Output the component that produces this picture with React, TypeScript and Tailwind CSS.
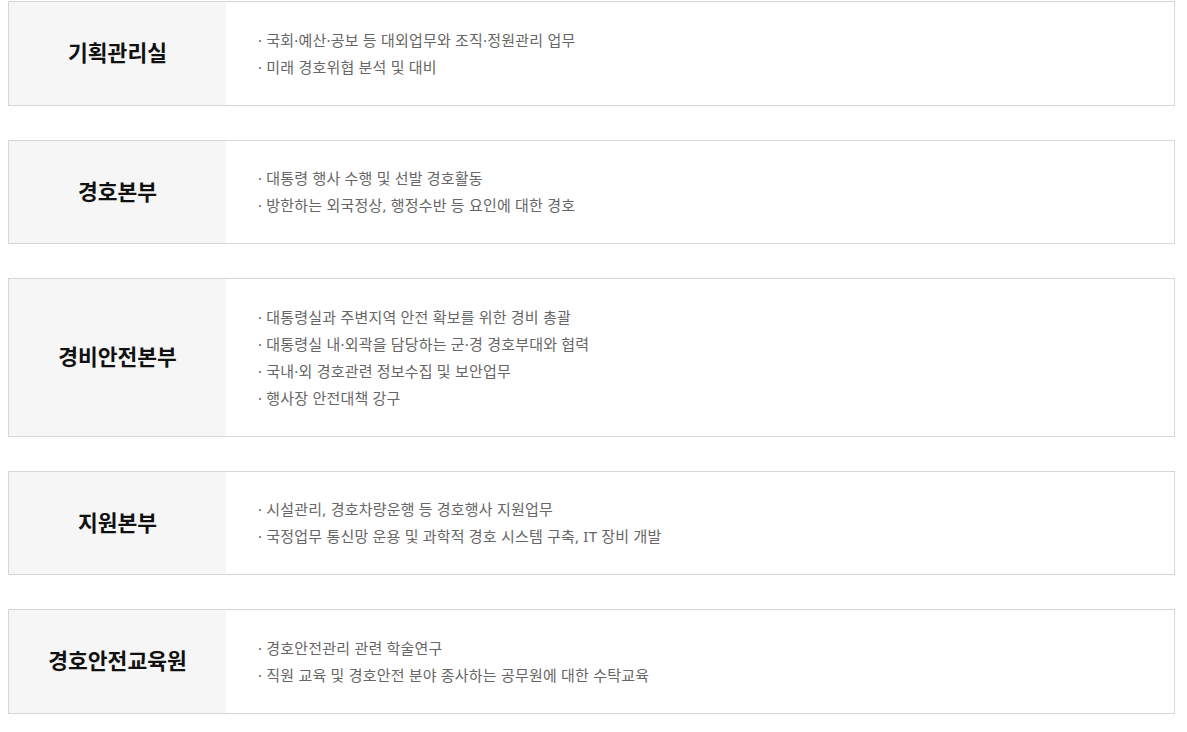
import React from "react";

const items: { title: string; lines: string[] }[] = [
  {
    title: "기획관리실",
    lines: ["국회·예산·공보 등 대외업무와 조직·정원관리 업무", "미래 경호위협 분석 및 대비"],
  },
  {
    title: "경호본부",
    lines: ["대통령 행사 수행 및 선발 경호활동", "방한하는 외국정상, 행정수반 등 요인에 대한 경호"],
  },
  {
    title: "경비안전본부",
    lines: [
      "대통령실과 주변지역 안전 확보를 위한 경비 총괄",
      "대통령실 내·외곽을 담당하는 군·경 경호부대와 협력",
      "국내·외 경호관련 정보수집 및 보안업무",
      "행사장 안전대책 강구",
    ],
  },
  {
    title: "지원본부",
    lines: ["시설관리, 경호차량운행 등 경호행사 지원업무", "국정업무 통신망 운용 및 과학적 경호 시스템 구축, IT 장비 개발"],
  },
  {
    title: "경호안전교육원",
    lines: ["경호안전관리 관련 학술연구", "직원 교육 및 경호안전 분야 종사하는 공무원에 대한 수탁교육"],
  },
];

export default function App() {
  return (
    <div
      className="w-[1187px] h-[732px] bg-white overflow-hidden"
      style={{ fontFamily: '"Noto Sans", "Noto Sans CJK KR", sans-serif' }}
    >
      <div className="ml-[8px] mt-[1px] w-[1167px] flex flex-col gap-[34px]">
        {items.map((it) => (
          <div key={it.title} className="flex border border-[#d6d6d6]">
            <div className="w-[217px] shrink-0 bg-[#f6f6f6] flex items-center justify-center">
              <span className="text-[21.5px] font-bold text-[#111]">{it.title}</span>
            </div>
            <div className="flex-1 pl-[32px] pt-[24.5px] pb-[24px]">
              {it.lines.map((l) => (
                <div key={l} className="text-[15px] leading-[27px] text-[#666] tracking-[0.2px]">
                  · {l}
                </div>
              ))}
            </div>
          </div>
        ))}
      </div>
    </div>
  );
}
